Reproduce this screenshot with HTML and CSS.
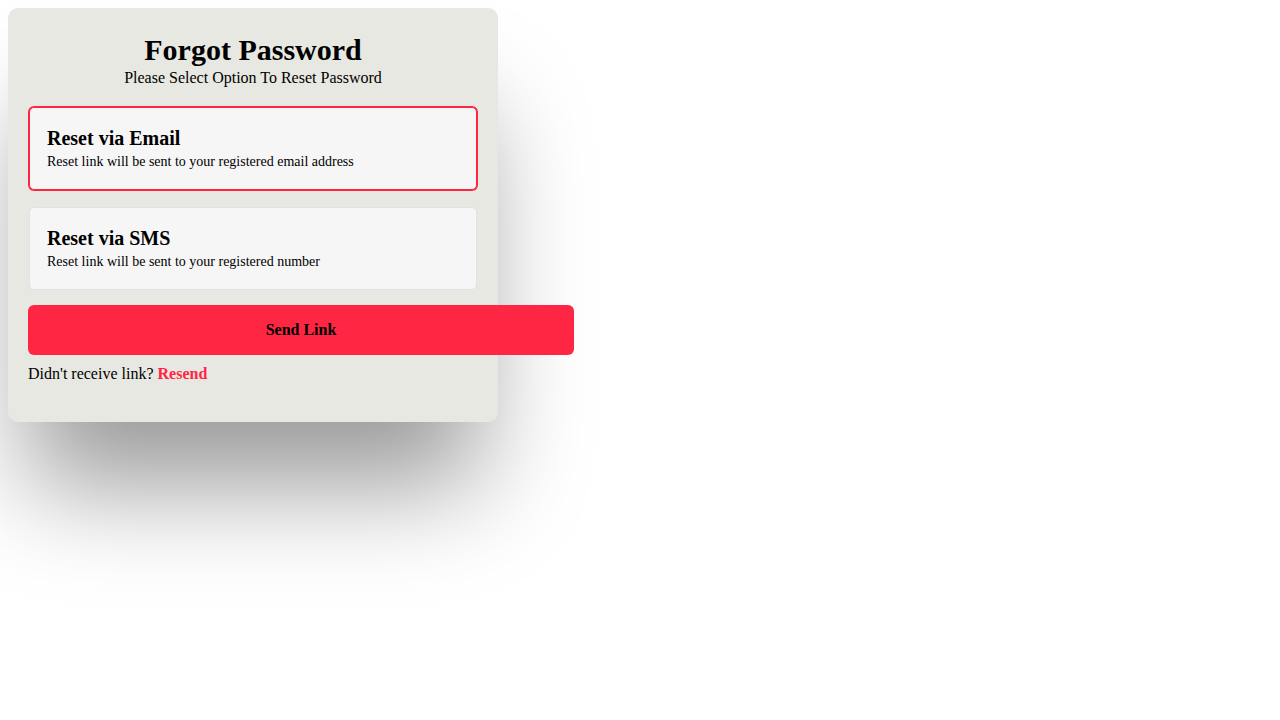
FILE: index.html
```html
<!DOCTYPE html>
<html lang="en">
<head>
<meta charset="utf-8">
<title>Forgot Password</title>
<link rel="stylesheet" href="styles.css">
</head>
<body>
<div class="card">
  <h1 class="title">Forgot Password</h1>
  <p class="subtitle">Please Select Option To Reset Password</p>
  <div class="options">
    <label class="option selected">
      <span class="option-title">Reset via Email</span>
      <span class="option-desc">Reset link will be sent to your registered email address</span>
    </label>
    <label class="option">
      <span class="option-title">Reset via SMS</span>
      <span class="option-desc">Reset link will be sent to your registered number</span>
    </label>
  </div>
  <button class="send-btn" type="button">Send Link</button>
  <p class="resend">Didn't receive link? <a class="resend-link" href="#">Resend</a></p>
</div>
</body>
</html>
```

FILE: styles.css
```css
html {
  background: #fff;
}

body {
  box-sizing: border-box;
  margin: 0;
  padding: 8px;
  min-height: 100vh;
  font-family: "Liberation Serif", "Times New Roman", serif;
  color: #000;
}

.card {
  box-sizing: border-box;
  width: 490px;
  padding: 25px 20px 39px;
  background: #e8e8e2;
  border-radius: 10px;
  box-shadow: 0 83px 100px -20px rgba(0, 0, 0, 0.4);
}

.title {
  margin: 0 0 2px;
  font-size: 30px;
  font-weight: bold;
  text-align: center;
}

.subtitle {
  margin: 0;
  font-size: 16px;
  text-align: center;
}

.options {
  display: flex;
  flex-direction: column;
  gap: 17px;
  margin-top: 20px;
  margin-bottom: 15px;
}

.option {
  display: flex;
  flex-direction: column;
  margin: 0 1px;
  padding: 19px 17px;
  background: #f6f6f6;
  border: 1px solid #e2e2e6;
  border-radius: 5px;
  cursor: pointer;
}

.option.selected {
  border-color: #fe2643;
  box-shadow: 0 0 0 1px #fe2643;
}

.option-title {
  font-size: 20px;
  font-weight: bold;
  margin-bottom: 4px;
}

.option-desc {
  font-size: 14px;
}

.send-btn {
  display: block;
  box-sizing: content-box;
  width: 100%;
  height: 50px;
  padding: 0 48px;
  border: none;
  border-radius: 6px;
  background: #fe2643;
  color: #000;
  font-family: "Liberation Serif", "Times New Roman", serif;
  font-size: 16px;
  font-weight: bold;
  cursor: pointer;
}

.resend {
  margin: 10px 0 0;
  font-size: 16px;
}

.resend-link {
  color: #fe2643;
  font-weight: bold;
  text-decoration: none;
}
```
